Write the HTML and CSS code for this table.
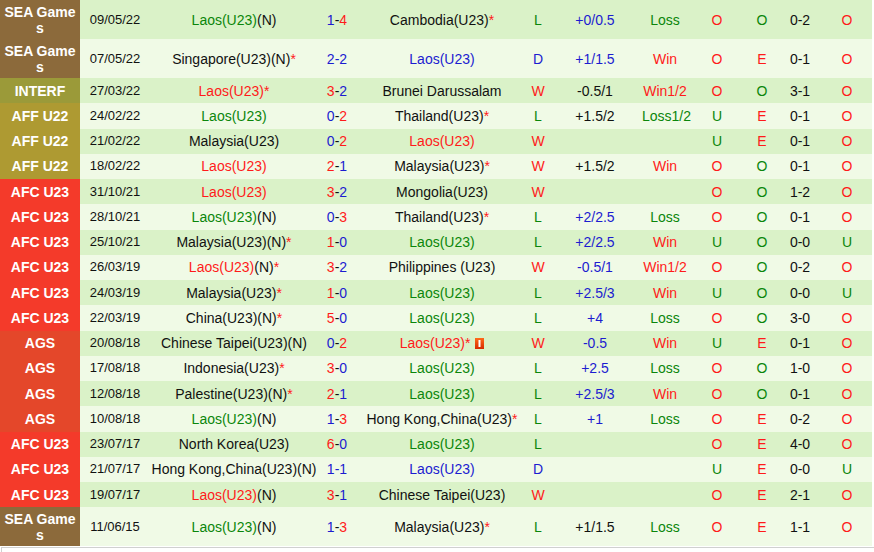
FILE: index.html
```html
<!DOCTYPE html>
<html>
<head>
<meta charset="utf-8">
<link rel="stylesheet" href="styles.css">
</head>
<body>
<table class="matches">
<colgroup>
<col class="c-lg"><col class="c-dt"><col class="c-tm"><col class="c-sc"><col class="c-tm2"><col class="c-wl"><col class="c-od"><col class="c-rs"><col class="c-ou"><col class="c-oe"><col class="c-ht"><col class="c-ls">
</colgroup>
<tbody>
<tr class="dark">
<td class="lg sea">SEA Games</td><td class="dt">09/05/22</td><td><span class="g">Laos(U23)</span>(N)</td><td><span class="b">1</span>-<span class="r">4</span></td><td>Cambodia(U23)<span class="r">*</span></td><td class="g">L</td><td class="b">+0/0.5</td><td class="g">Loss</td><td class="r">O</td><td class="g">O</td><td>0-2</td><td class="r">O</td>
</tr>
<tr class="light">
<td class="lg sea">SEA Games</td><td class="dt">07/05/22</td><td>Singapore(U23)(N)<span class="r">*</span></td><td><span class="b">2</span><span class="b">-</span><span class="b">2</span></td><td class="b">Laos(U23)</td><td class="b">D</td><td class="b">+1/1.5</td><td class="r">Win</td><td class="r">O</td><td class="r">E</td><td>0-1</td><td class="r">O</td>
</tr>
<tr class="dark">
<td class="lg interf">INTERF</td><td class="dt">27/03/22</td><td><span class="r">Laos(U23)*</span></td><td><span class="r">3</span>-<span class="b">2</span></td><td>Brunei Darussalam</td><td class="r">W</td><td>-0.5/1</td><td class="r">Win1/2</td><td class="r">O</td><td class="g">O</td><td>3-1</td><td class="r">O</td>
</tr>
<tr class="light">
<td class="lg aff">AFF U22</td><td class="dt">24/02/22</td><td class="g">Laos(U23)</td><td><span class="b">0</span>-<span class="r">2</span></td><td>Thailand(U23)<span class="r">*</span></td><td class="g">L</td><td>+1.5/2</td><td class="g">Loss1/2</td><td class="g">U</td><td class="r">E</td><td>0-1</td><td class="r">O</td>
</tr>
<tr class="dark">
<td class="lg aff">AFF U22</td><td class="dt">21/02/22</td><td>Malaysia(U23)</td><td><span class="b">0</span>-<span class="r">2</span></td><td class="r">Laos(U23)</td><td class="r">W</td><td></td><td></td><td class="g">U</td><td class="r">E</td><td>0-1</td><td class="r">O</td>
</tr>
<tr class="light">
<td class="lg aff">AFF U22</td><td class="dt">18/02/22</td><td class="r">Laos(U23)</td><td><span class="r">2</span>-<span class="b">1</span></td><td>Malaysia(U23)<span class="r">*</span></td><td class="r">W</td><td>+1.5/2</td><td class="r">Win</td><td class="r">O</td><td class="g">O</td><td>0-1</td><td class="r">O</td>
</tr>
<tr class="dark">
<td class="lg afc">AFC U23</td><td class="dt">31/10/21</td><td class="r">Laos(U23)</td><td><span class="r">3</span>-<span class="b">2</span></td><td>Mongolia(U23)</td><td class="r">W</td><td></td><td></td><td class="r">O</td><td class="g">O</td><td>1-2</td><td class="r">O</td>
</tr>
<tr class="light">
<td class="lg afc">AFC U23</td><td class="dt">28/10/21</td><td><span class="g">Laos(U23)</span>(N)</td><td><span class="b">0</span>-<span class="r">3</span></td><td>Thailand(U23)<span class="r">*</span></td><td class="g">L</td><td class="b">+2/2.5</td><td class="g">Loss</td><td class="r">O</td><td class="g">O</td><td>0-1</td><td class="r">O</td>
</tr>
<tr class="dark">
<td class="lg afc">AFC U23</td><td class="dt">25/10/21</td><td>Malaysia(U23)(N)<span class="r">*</span></td><td><span class="r">1</span>-<span class="b">0</span></td><td class="g">Laos(U23)</td><td class="g">L</td><td class="b">+2/2.5</td><td class="r">Win</td><td class="g">U</td><td class="g">O</td><td>0-0</td><td class="g">U</td>
</tr>
<tr class="light">
<td class="lg afc">AFC U23</td><td class="dt">26/03/19</td><td><span class="r">Laos(U23)</span>(N)<span class="r">*</span></td><td><span class="r">3</span>-<span class="b">2</span></td><td>Philippines (U23)</td><td class="r">W</td><td class="b">-0.5/1</td><td class="r">Win1/2</td><td class="r">O</td><td class="g">O</td><td>0-2</td><td class="r">O</td>
</tr>
<tr class="dark">
<td class="lg afc">AFC U23</td><td class="dt">24/03/19</td><td>Malaysia(U23)<span class="r">*</span></td><td><span class="r">1</span>-<span class="b">0</span></td><td class="g">Laos(U23)</td><td class="g">L</td><td class="b">+2.5/3</td><td class="r">Win</td><td class="g">U</td><td class="g">O</td><td>0-0</td><td class="g">U</td>
</tr>
<tr class="light">
<td class="lg afc">AFC U23</td><td class="dt">22/03/19</td><td>China(U23)(N)<span class="r">*</span></td><td><span class="r">5</span>-<span class="b">0</span></td><td class="g">Laos(U23)</td><td class="g">L</td><td class="b">+4</td><td class="g">Loss</td><td class="r">O</td><td class="g">O</td><td>3-0</td><td class="r">O</td>
</tr>
<tr class="dark">
<td class="lg ags">AGS</td><td class="dt">20/08/18</td><td>Chinese Taipei(U23)(N)</td><td><span class="b">0</span>-<span class="r">2</span></td><td><span class="r">Laos(U23)*</span> <svg class="card" width="9" height="11" viewBox="0 0 9 11"><defs><linearGradient id="cg" x1="0" y1="0" x2="0" y2="1"><stop offset="0" stop-color="#ff6a1a"/><stop offset="1" stop-color="#d62a00"/></linearGradient></defs><rect x="0" y="0" width="9" height="11" fill="url(#cg)"/><rect x="3.5" y="2" width="2" height="7" fill="#fff"/></svg></td><td class="r">W</td><td class="b">-0.5</td><td class="r">Win</td><td class="g">U</td><td class="r">E</td><td>0-1</td><td class="r">O</td>
</tr>
<tr class="light">
<td class="lg ags">AGS</td><td class="dt">17/08/18</td><td>Indonesia(U23)<span class="r">*</span></td><td><span class="r">3</span>-<span class="b">0</span></td><td class="g">Laos(U23)</td><td class="g">L</td><td class="b">+2.5</td><td class="g">Loss</td><td class="r">O</td><td class="g">O</td><td>1-0</td><td class="r">O</td>
</tr>
<tr class="dark">
<td class="lg ags">AGS</td><td class="dt">12/08/18</td><td>Palestine(U23)(N)<span class="r">*</span></td><td><span class="r">2</span>-<span class="b">1</span></td><td class="g">Laos(U23)</td><td class="g">L</td><td class="b">+2.5/3</td><td class="r">Win</td><td class="r">O</td><td class="g">O</td><td>0-1</td><td class="r">O</td>
</tr>
<tr class="light">
<td class="lg ags">AGS</td><td class="dt">10/08/18</td><td><span class="g">Laos(U23)</span>(N)</td><td><span class="b">1</span>-<span class="r">3</span></td><td>Hong Kong,China(U23)<span class="r">*</span></td><td class="g">L</td><td class="b">+1</td><td class="g">Loss</td><td class="r">O</td><td class="r">E</td><td>0-2</td><td class="r">O</td>
</tr>
<tr class="dark">
<td class="lg afc">AFC U23</td><td class="dt">23/07/17</td><td>North Korea(U23)</td><td><span class="r">6</span>-<span class="b">0</span></td><td class="g">Laos(U23)</td><td class="g">L</td><td></td><td></td><td class="r">O</td><td class="r">E</td><td>4-0</td><td class="r">O</td>
</tr>
<tr class="light">
<td class="lg afc">AFC U23</td><td class="dt">21/07/17</td><td>Hong Kong,China(U23)(N)</td><td><span class="b">1</span><span class="b">-</span><span class="b">1</span></td><td class="b">Laos(U23)</td><td class="b">D</td><td></td><td></td><td class="g">U</td><td class="r">E</td><td>0-0</td><td class="g">U</td>
</tr>
<tr class="dark">
<td class="lg afc">AFC U23</td><td class="dt">19/07/17</td><td><span class="r">Laos(U23)</span>(N)</td><td><span class="r">3</span>-<span class="b">1</span></td><td>Chinese Taipei(U23)</td><td class="r">W</td><td></td><td></td><td class="r">O</td><td class="r">E</td><td>2-1</td><td class="r">O</td>
</tr>
<tr class="light">
<td class="lg sea">SEA Games</td><td class="dt">11/06/15</td><td><span class="g">Laos(U23)</span>(N)</td><td><span class="b">1</span>-<span class="r">3</span></td><td>Malaysia(U23)<span class="r">*</span></td><td class="g">L</td><td>+1/1.5</td><td class="g">Loss</td><td class="r">O</td><td class="r">E</td><td>1-1</td><td class="r">O</td>
</tr>
</tbody>
</table>
<div class="below"></div>
</body>
</html>
```
FILE: styles.css
```css
html, body {
  margin: 0;
  padding: 0;
  background: #ffffff;
}
body {
  font-family: "Liberation Sans", Arial, sans-serif;
  font-size: 14px;
  color: #111111;
}
.matches {
  width: 872px;
  table-layout: fixed;
  border-collapse: collapse;
  border-spacing: 0;
}
.c-lg { width: 80px; }
.c-dt { width: 70px; }
.c-tm { width: 168px; }
.c-sc { width: 38px; }
.c-tm2 { width: 172px; }
.c-wl { width: 20px; }
.c-od { width: 94px; }
.c-rs { width: 46px; }
.c-ou { width: 58px; }
.c-oe { width: 32px; }
.c-ht { width: 44px; }
.c-ls { width: 50px; }
.matches tr {
  height: 25.25px;
}
.matches td {
  padding: 3.5px 0;
  line-height: 16px;
  text-align: center;
  vertical-align: middle;
  white-space: nowrap;
  overflow: visible;
}
.dark td { background: #daf2c8; }
.light td { background: #f0fae6; }
.matches td.dt { font-size: 13px; }
.matches td.lg {
  color: #ffffff;
  font-weight: bold;
  white-space: normal;
  word-break: break-all;
  padding-left: 2px;
  padding-right: 2px;
}
.matches td.sea { background: #8c6a3b; }
.matches td.interf { background: #9b9a39; }
.matches td.aff { background: #ae9a32; }
.matches td.afc { background: #f43a2a; }
.matches td.ags { background: #e4472a; }
.g { color: #0b860b; }
.r { color: #ff1a1a; }
.b { color: #1c1cd0; }
.card {
  vertical-align: -1px;
  margin-left: 1px;
}
.below {
  margin-left: 1px;
  margin-top: 1px;
  height: 12px;
  border-top: 1px solid #d0d0d0;
  border-left: 1px solid #d0d0d0;
}
```
